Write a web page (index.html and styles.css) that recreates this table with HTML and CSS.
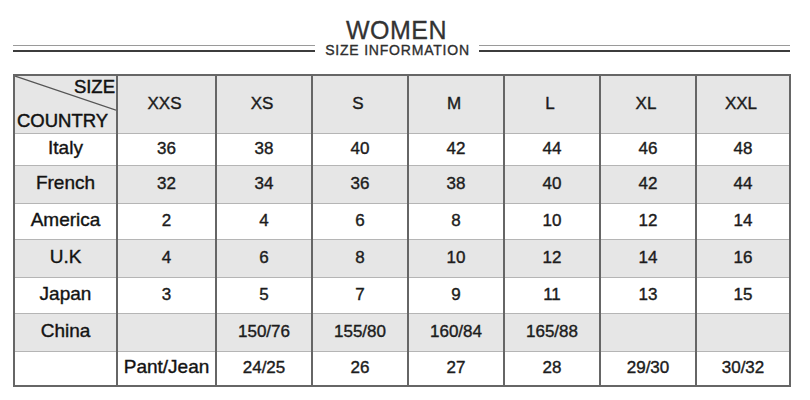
FILE: index.html
```html
<!DOCTYPE html>
<html>
<head>
<meta charset="utf-8">
<link rel="stylesheet" href="styles.css">
</head>
<body>
<div class="page">
  <header class="title">
    <h1 class="women">WOMEN</h1>
    <div class="sub-row">
      <span class="rule rule-l"></span>
      <span class="sub">SIZE INFORMATION</span>
      <span class="rule rule-r"></span>
    </div>
  </header>
  <table class="chart">
    <colgroup>
      <col class="c-first"><col class="c-second"><col class="c-std"><col class="c-std"><col class="c-std"><col class="c-std"><col class="c-std"><col class="c-last">
    </colgroup>
    <tr class="row-head gray">
      <td class="corner">
        <svg class="diag" viewBox="0 0 100 58" preserveAspectRatio="none"><line x1="0" y1="0" x2="100" y2="35" stroke="#555" stroke-width="1.2" vector-effect="non-scaling-stroke"/></svg>
        <div class="corner-in"><span class="c-size">SIZE</span><span class="c-country">COUNTRY</span></div>
      </td>
      <td class="hd">XXS</td><td class="hd">XS</td><td class="hd">S</td><td class="hd">M</td><td class="hd">L</td><td class="hd">XL</td><td class="hd">XXL</td>
    </tr>
    <tr class="row-a">
      <td class="lbl">Italy</td><td>36</td><td>38</td><td>40</td><td>42</td><td>44</td><td>46</td><td>48</td>
    </tr>
    <tr class="row-b gray">
      <td class="lbl">French</td><td>32</td><td>34</td><td>36</td><td>38</td><td>40</td><td>42</td><td>44</td>
    </tr>
    <tr class="row-c">
      <td class="lbl">America</td><td>2</td><td>4</td><td>6</td><td>8</td><td>10</td><td>12</td><td>14</td>
    </tr>
    <tr class="row-b gray">
      <td class="lbl">U.K</td><td>4</td><td>6</td><td>8</td><td>10</td><td>12</td><td>14</td><td>16</td>
    </tr>
    <tr class="row-c">
      <td class="lbl">Japan</td><td>3</td><td>5</td><td>7</td><td>9</td><td>11</td><td>13</td><td>15</td>
    </tr>
    <tr class="row-b gray">
      <td class="lbl">China</td><td></td><td>150/76</td><td>155/80</td><td>160/84</td><td>165/88</td><td></td><td></td>
    </tr>
    <tr class="row-last">
      <td></td><td class="lbl">Pant/Jean</td><td>24/25</td><td>26</td><td>27</td><td>28</td><td>29/30</td><td>30/32</td>
    </tr>
  </table>
</div>
</body>
</html>
```
FILE: styles.css
```css
* { box-sizing: border-box; }
html, body { margin: 0; padding: 0; background: #fff; }
body {
  font-family: "Liberation Sans", Arial, sans-serif;
  color: #1a1a1a;
  width: 810px;
  height: 400px;
  overflow: hidden;
}
.page { padding: 17px 0 0 13px; }

.title { width: 777px; }
.women {
  margin: 0;
  font-weight: normal;
  font-size: 25px;
  line-height: 26px;
  letter-spacing: 0.5px;
  text-align: center;
  color: #333;
  padding-right: 10px;
  -webkit-text-stroke: 0.3px #333;
}
.sub-row {
  display: flex;
  align-items: center;
  height: 14px;
}
.sub {
  font-size: 14px;
  line-height: 14px;
  letter-spacing: 0.8px;
  color: #2e2e2e;
  padding: 0 9px 0 10px;
  white-space: nowrap;
  -webkit-text-stroke: 0.35px #2e2e2e;
}
.rule {
  height: 7px;
  border-top: 1.5px solid #9a9a9a;
  border-bottom: 2px solid #3c3c3c;
  margin-top: -3px;
}
.rule-l { flex: 303 1 0; }
.rule-r { flex: 312 1 0; }

.chart {
  margin-top: 17px;
  border-collapse: collapse;
  table-layout: fixed;
  width: 777px;
  border: 2px solid #666;
}
.c-first { width: 103px; }
.c-second { width: 99px; }
.c-std { width: 96px; }
.c-last { width: 94px; }

.chart td {
  border-left: 2px solid #666;
  border-right: 2px solid #666;
  border-top: 1px solid #b5b5b5;
  border-bottom: 1px solid #b5b5b5;
  text-align: center;
  vertical-align: middle;
  padding: 0;
  font-size: 17px;
  color: #1c1c1c;
  -webkit-text-stroke: 0.4px #1c1c1c;
}
.gray td { background: #e6e6e6; }
.row-head td { height: 58px; }
.row-a td { height: 32px; }
.row-b td { height: 38px; }
.row-c td { height: 36px; }
.row-last td { height: 35px; }

.chart td.hd { font-size: 17px; color: #1c1c1c; padding-right: 4px; }
.chart td.lbl { font-size: 19px; color: #111; padding-bottom: 3px; }

.chart td.corner {
  position: relative;
  padding: 0;
}
.diag {
  position: absolute;
  left: 0;
  top: 0;
  width: 100%;
  height: 100%;
}
.corner-in {
  display: flex;
  flex-direction: column;
  justify-content: space-between;
  height: 54px;
  padding: 0 1px 0 2px;
  font-size: 18.5px;
  line-height: 20px;
  color: #111;
  -webkit-text-stroke: 0.45px #111;
}
.c-size { text-align: right; }
.c-country { text-align: left; }
```
